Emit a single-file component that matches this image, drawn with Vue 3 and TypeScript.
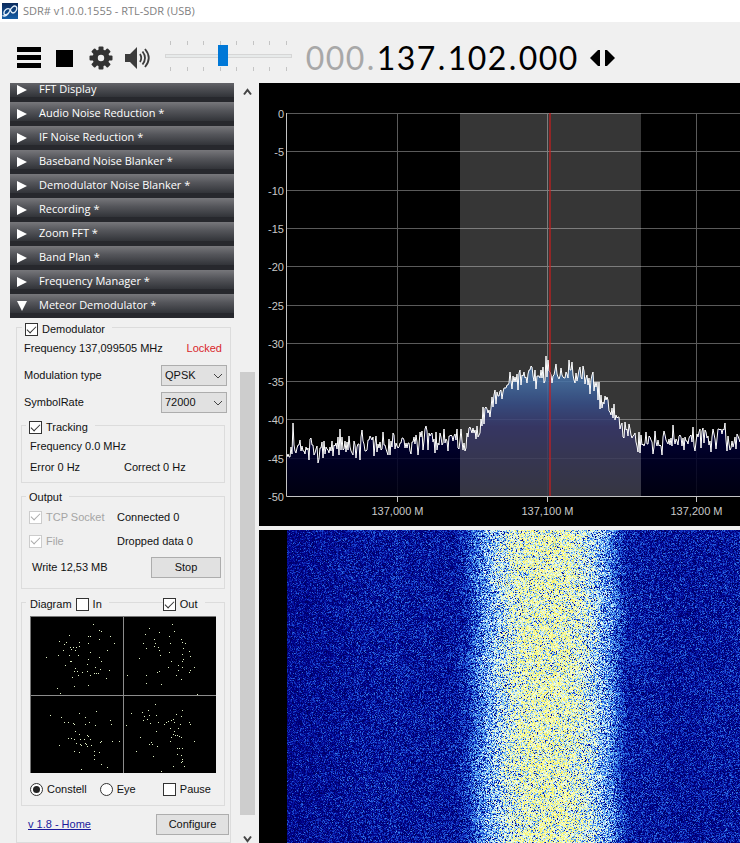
<script setup lang="ts">
import { onBeforeUnmount, onMounted, ref } from 'vue'

const plugins: string[] = [
  'FFT Display',
  'Audio Noise Reduction *',
  'IF Noise Reduction *',
  'Baseband Noise Blanker *',
  'Demodulator Noise Blanker *',
  'Recording *',
  'Zoom FFT *',
  'Band Plan *',
  'Frequency Manager *',
  'Meteor Demodulator *',
]
const openPlugin = ref('Meteor Demodulator *')

const digits = '000.137.102.000'.split('')
const volume = ref(45)
const demodulator = ref(true)
const tracking = ref(true)
const showIn = ref(false)
const showOut = ref(true)
const pause = ref(false)
const view = ref('constell')
const modulation = ref('QPSK')
const symbolRate = ref('72000')

// Small repeatable generator, so the noise looks the same on every load.
function makeRandom(seed: number): () => number {
  let s = seed
  return () => {
    s = (s + 0x6d2b79f5) | 0
    let t = Math.imul(s ^ (s >>> 15), 1 | s)
    t = (t + Math.imul(t ^ (t >>> 7), 61 | t)) ^ t
    return ((t ^ (t >>> 14)) >>> 0) / 4294967296
  }
}

type Point = [number, number]

function interpolate(points: Point[], x: number): number {
  for (let i = 1; i < points.length; i++) {
    const [x0, y0] = points[i - 1]
    const [x1, y1] = points[i]
    if (x <= x1) return y0 + ((y1 - y0) * (x - x0)) / (x1 - x0)
  }
  return points[points.length - 1][1]
}

// Spectrum, in the plot's own units.
const dbLines = Array.from({ length: 11 }, (_, i) => ({
  label: String(i === 0 ? 0 : -5 * i),
  y: Math.round(30 + i * 38.3) + 0.5,
}))
const freqLines = [
  { label: '137,000 M', x: 138.5 },
  { label: '137,100 M', x: 288.5 },
  { label: '137,200 M', x: 437.5 },
]
const envelope: Point[] = [
  [28, 368], [50, 368], [80, 364], [110, 362], [141, 361], [170, 357], [196, 357],
  [204, 359], [212, 350], [221, 341], [230, 325], [240, 307], [250, 299], [262, 295],
  [275, 292], [300, 291], [315, 292], [330, 294], [339, 310], [350, 322], [358, 335],
  [366, 348], [379, 356], [400, 359], [430, 356], [481, 355],
]
const spikes: Record<number, number> = {
  34: 340, 81: 346, 124: 349, 185: 346, 202: 346, 287: 273, 313: 279, 414: 342, 444: 345,
}
const rnd = makeRandom(41)
const samples: Point[] = []
for (let x = 28; x <= 482; x++) {
  const noise = (rnd() + rnd() - 1) * 16
  samples.push([x, spikes[x] ?? Math.round(interpolate(envelope, x) + noise)])
}
const trace = samples.map(([x, y]) => `${x},${y}`).join(' ')
const area = `28,413 ${trace} 482,413`

// Constellation points.
const stars: Point[] = [
  [280, 103], [296, 121], [304, 122], [206, 136], [263, 139], [271, 139], [331, 137], [176, 154],
  [199, 157], [191, 163], [237, 155], [298, 148], [343, 160], [265, 160], [209, 170], [219, 170],
  [212, 178], [226, 180], [190, 179], [238, 169], [271, 187], [322, 181], [175, 196], [206, 196],
  [233, 196], [263, 206], [298, 200], [139, 200], [209, 213], [214, 213], [262, 222], [303, 212],
  [196, 225], [224, 233], [286, 232], [301, 238], [328, 241], [221, 244], [232, 244], [247, 247],
  [262, 244], [289, 250], [293, 248], [235, 256], [271, 256], [319, 265], [223, 289], [263, 286],
  [172, 295], [179, 308], [217, 262], [283, 250], [227, 171], [448, 115], [517, 103], [436, 131],
  [478, 127], [523, 122], [463, 148], [508, 139], [428, 160], [466, 160], [511, 160], [544, 148],
  [545, 157], [556, 160], [439, 173], [463, 169], [475, 172], [476, 180], [548, 173], [568, 184],
  [481, 194], [508, 187], [418, 203], [545, 193], [548, 206], [569, 199], [514, 214], [547, 214],
  [535, 226], [547, 232], [581, 232], [505, 232], [472, 247], [478, 244], [533, 241], [568, 247],
  [439, 256], [529, 256], [544, 268], [484, 283], [439, 280], [592, 313], [382, 256], [569, 239],
  [149, 376], [184, 382], [238, 370], [289, 364], [331, 391], [332, 403], [191, 397], [205, 397],
  [220, 400], [221, 403], [254, 403], [268, 397], [286, 406], [256, 382], [226, 424], [238, 433],
  [205, 445], [223, 448], [212, 444], [241, 448], [253, 446], [262, 436], [265, 438], [271, 448],
  [241, 463], [244, 466], [256, 460], [260, 469], [274, 466], [301, 457], [304, 454], [335, 454],
  [358, 454], [176, 466], [221, 484], [236, 487], [259, 463], [283, 484], [298, 487], [283, 496],
  [283, 508], [304, 523], [322, 532], [242, 538], [229, 460], [466, 343], [427, 367], [445, 361],
  [394, 370], [433, 379], [448, 376], [469, 376], [442, 388], [428, 391], [379, 406], [451, 400],
  [473, 397], [493, 403], [499, 397], [505, 394], [514, 391], [523, 397], [520, 386], [529, 373],
  [545, 361], [544, 379], [568, 397], [569, 403], [541, 403], [469, 424], [511, 415], [535, 415],
  [523, 424], [520, 433], [526, 436], [530, 436], [544, 442], [514, 442], [421, 442], [511, 454],
  [583, 454], [457, 463], [448, 463], [454, 457], [470, 469], [532, 475], [538, 475], [547, 475],
  [409, 484], [460, 499], [532, 493], [544, 494], [547, 508], [544, 517], [520, 529], [553, 529],
  [484, 543], [547, 514], [538, 437],
]

// Waterfall.
const waterfall = ref<HTMLCanvasElement | null>(null)
const level: Point[] = [
  [28, 0.22], [110, 0.27], [195, 0.27], [207, 0.34], [216, 0.46], [226, 0.58], [238, 0.7],
  [250, 0.8], [264, 0.89], [285, 0.92], [308, 0.9], [322, 0.82], [336, 0.7], [348, 0.58],
  [358, 0.44], [368, 0.3], [420, 0.26], [481, 0.28],
]
const stops: [number, number, number, number][] = [
  [0, 0, 0, 100], [0.2, 0, 0, 134], [0.3, 8, 24, 165], [0.42, 28, 80, 215], [0.55, 70, 150, 235],
  [0.68, 160, 215, 248], [0.8, 236, 252, 246], [0.92, 250, 253, 175], [1.06, 246, 242, 110],
]

function colour(v: number): number[] {
  if (v <= 0) return stops[0].slice(1)
  for (let i = 1; i < stops.length; i++) {
    if (v <= stops[i][0]) {
      const a = stops[i - 1]
      const b = stops[i]
      const t = (v - a[0]) / (b[0] - a[0])
      return [1, 2, 3].map((k) => a[k] + (b[k] - a[k]) * t)
    }
  }
  return stops[stops.length - 1].slice(1)
}

function drawWaterfall(): void {
  const canvas = waterfall.value
  const ctx = canvas?.getContext('2d')
  if (!canvas || !ctx) return
  const w = Math.max(1, canvas.clientWidth)
  const h = Math.max(1, canvas.clientHeight)
  canvas.width = w
  canvas.height = h
  const image = ctx.createImageData(w, h)
  const random = makeRandom(7)
  const scale = 481 / w
  for (let y = 0; y < h; y++) {
    const drift = Math.sin(y / 17) * 2
    for (let x = 0; x < w; x++) {
      const px = x * scale
      let rgb = [0, 0, 0]
      if (px >= 28) {
        let base = interpolate(level, Math.max(28, px + drift))
        if (Math.abs(px - 137) < 1) base += 0.06
        const spread = 0.1 + base * 0.1
        const n = Math.log(0.02 - Math.log(1 - random() * 0.999)) * spread + 0.04
        rgb = colour(base + n)
      }
      const i = (y * w + x) * 4
      image.data[i] = rgb[0]
      image.data[i + 1] = rgb[1]
      image.data[i + 2] = rgb[2]
      image.data[i + 3] = 255
    }
  }
  ctx.putImageData(image, 0, 0)
}

onMounted(() => {
  drawWaterfall()
  window.addEventListener('resize', drawWaterfall)
})
onBeforeUnmount(() => window.removeEventListener('resize', drawWaterfall))
</script>

<template>
  <div class="app">
    <header class="titlebar">
      <svg class="logo" viewBox="0 0 16 16" aria-hidden="true">
        <defs>
          <linearGradient id="logo-bg" x1="0" y1="0" x2="0" y2="1">
            <stop offset="0" stop-color="#0a2a5c" />
            <stop offset="1" stop-color="#1760a8" />
          </linearGradient>
        </defs>
        <rect width="16" height="16" fill="url(#logo-bg)" />
        <path
          d="M0.500 12.500C3 14 6 12 7.500 8.500C9 4.500 12 2 14 3.500C16 5.500 13.500 10 11 10C8.500 10 9 7 7.500 6C5 4.500 1.500 8 2 10.500C2.500 13 6 11.500 7.500 8.500"
          fill="none" stroke="#e4f0fa" stroke-width="1.300" />
      </svg>
      <span>SDR# v1.0.0.1555 - RTL-SDR (USB)</span>
    </header>

    <div class="toolbar">
      <button class="tool" type="button" aria-label="Menu">
        <svg width="24" height="22" viewBox="0 0 24 22"><path d="M0 0h24v5H0zM0 8h24v5H0zM0 16h24v5H0z" /></svg>
      </button>
      <button class="tool stop" type="button" aria-label="Stop radio">
        <svg width="18" height="18" viewBox="0 0 18 18"><rect width="17" height="17" y="1" /></svg>
      </button>
      <button class="tool gear" type="button" aria-label="Settings">
        <svg width="24" height="24" viewBox="-12 -12 24 24" fill="#333">
          <g>
            <rect v-for="a in 8" :key="a" x="-2.500" y="-11.500" width="5" height="6" rx="1" :transform="`rotate(${a * 45})`" />
          </g>
          <path fill-rule="evenodd" d="M0-8.500a8.500 8.500 0 1 0 0 17a8.500 8.500 0 1 0 0-17zM0-3.200a3.200 3.200 0 1 1 0 6.400a3.200 3.200 0 1 1 0-6.400z" />
        </svg>
      </button>
      <button class="tool speaker" type="button" aria-label="Mute">
        <svg width="25" height="22" viewBox="0 0 25 22">
          <path d="M0 7h5L12 0v22L5 15H0z" fill="#3c3c3c" />
          <path d="M15 7q2.500 4 0 8M17.500 4.500q5 6.500 0 13M20 2q7.500 9 0 18" fill="none" stroke="#3c3c3c" stroke-width="1.800" />
        </svg>
      </button>
      <div class="volume">
        <span class="ticks"><i v-for="n in 8" :key="n"></i></span>
        <input v-model.number="volume" type="range" min="0" max="100" aria-label="Volume" />
        <span class="ticks"><i v-for="n in 8" :key="n"></i></span>
      </div>
      <div class="frequency">
        <span v-for="(d, i) in digits" :key="i" :class="{ dot: d === '.', idle: i < 4 }">{{ d }}</span>
      </div>
      <button class="tool step" type="button" aria-label="Change tuning style">
        <svg width="26" height="18" viewBox="0 0 26 18"><path d="M0 9L8 1h2v16H8zM25 9L17 1h-2v16h2z" /></svg>
      </button>
    </div>

    <div class="main">
      <aside class="side">
        <div class="panel">
          <div class="plugins">
            <button v-for="p in plugins" :key="p" type="button" class="plugin" @click="openPlugin = p">
              <svg width="12" height="12" viewBox="0 0 12 12" aria-hidden="true">
                <path :d="p === openPlugin ? 'M1 1h10L6 11z' : 'M1 1l10 5L1 11z'" fill="#fff" />
              </svg>
              <span>{{ p }}</span>
            </button>
          </div>

          <fieldset class="group outer">
            <legend>
              <label class="check"><input v-model="demodulator" type="checkbox" />Demodulator</label>
            </legend>
            <div class="row freq"><span>Frequency 137,099505 MHz</span><span class="locked">Locked</span></div>
            <div class="row pick">
              <label for="modulation">Modulation type</label>
              <span class="select">
                <select id="modulation" v-model="modulation"><option>QPSK</option><option>OQPSK</option></select>
                <svg width="10" height="6" viewBox="0 0 10 6"><path d="M1 1l4 4l4-4" /></svg>
              </span>
            </div>
            <div class="row pick">
              <label for="rate">SymbolRate</label>
              <span class="select">
                <select id="rate" v-model="symbolRate"><option>72000</option><option>80000</option></select>
                <svg width="10" height="6" viewBox="0 0 10 6"><path d="M1 1l4 4l4-4" /></svg>
              </span>
            </div>

            <fieldset class="group">
              <legend>
                <label class="check"><input v-model="tracking" type="checkbox" />Tracking</label>
              </legend>
              <div class="row tracking">Frequency 0.0 MHz</div>
              <div class="row error"><span>Error 0 Hz</span><span>Correct 0 Hz</span></div>
            </fieldset>

            <fieldset class="group inner">
              <legend class="plain">Output</legend>
              <div class="row output">
                <label class="check"><input type="checkbox" checked disabled />TCP Socket</label>
                <span>Connected 0</span>
              </div>
              <div class="row output">
                <label class="check"><input type="checkbox" checked disabled />File</label>
                <span>Dropped data 0</span>
              </div>
              <div class="row write">
                <span>Write 12,53 MB</span>
                <button class="push" type="button">Stop</button>
              </div>
            </fieldset>

            <fieldset class="group inner">
              <legend class="diagram-legend">
                <span>Diagram</span>
                <label class="check"><input v-model="showIn" type="checkbox" />In</label>
                <i></i>
                <label class="check"><input v-model="showOut" type="checkbox" />Out</label>
              </legend>
              <svg class="constellation" viewBox="90 78 558 471" shape-rendering="crispEdges">
                <rect x="90" y="78" width="558" height="471" />
                <path d="M370.500 78V549M90 316.500H648" stroke="#8c8c8c" stroke-width="3" />
                <path d="M91.500 549V79.500H648" fill="none" stroke="#777" stroke-width="3" />
                <rect v-for="(s, i) in stars" :key="i" :x="s[0]" :y="s[1]" width="3" height="3" class="star" />
              </svg>
              <div class="row views">
                <label class="check"><input v-model="view" type="radio" name="view" value="constell" />Constell</label>
                <label class="check"><input v-model="view" type="radio" name="view" value="eye" />Eye</label>
                <label class="check"><input v-model="pause" type="checkbox" />Pause</label>
              </div>
            </fieldset>

            <div class="row foot">
              <a href="#home">v 1.8 - Home</a>
              <button class="push" type="button">Configure</button>
            </div>
          </fieldset>
        </div>

        <div class="scrollbar" aria-hidden="true">
          <svg width="9" height="8" viewBox="0 0 9 8"><path d="M1 6.500L4.500 2L8 6.500" /></svg>
          <div class="thumb"></div>
          <svg width="9" height="8" viewBox="0 0 9 8"><path d="M1 1.500L4.500 6L8 1.500" /></svg>
        </div>
      </aside>

      <main class="displays">
        <svg class="spectrum" viewBox="0 0 481 443" role="img" aria-label="Spectrum">
          <defs>
            <linearGradient id="fill" gradientUnits="userSpaceOnUse" x1="0" y1="270" x2="0" y2="413">
              <stop offset="0" stop-color="#1e5a9c" />
              <stop offset="0.200" stop-color="#12488c" />
              <stop offset="0.360" stop-color="#001e68" />
              <stop offset="0.520" stop-color="#000042" />
              <stop offset="0.750" stop-color="#000028" />
              <stop offset="1" stop-color="#000012" />
            </linearGradient>
          </defs>
          <rect width="481" height="443" fill="#000" />
          <g stroke="#5a5a5a">
            <line v-for="l in dbLines" :key="l.label" x1="28" x2="481" :y1="l.y" :y2="l.y" />
            <line v-for="f in freqLines" :key="f.label" :x1="f.x" :x2="f.x" y1="30" y2="413" />
          </g>
          <polygon :points="area" fill="url(#fill)" fill-opacity="0.850" />
          <rect x="201" y="30" width="181" height="383" fill="#fff" fill-opacity="0.210" />
          <polyline :points="trace" fill="none" stroke="#fff" />
          <path d="M291 30V413" stroke="#c81e1e" stroke-opacity="0.850" stroke-width="1.500" />
          <path d="M27.500 30V413.500H481M138.500 413v6M288.500 413v6M437.500 413v6" fill="none" stroke="#c4c4c4" />
          <g class="axis">
            <text v-for="l in dbLines" :key="l.label" x="25" :y="l.y + 4" text-anchor="end">{{ l.label }}</text>
            <text v-for="f in freqLines" :key="f.label" :x="f.x" y="432" text-anchor="middle">{{ f.label }}</text>
          </g>
        </svg>
        <div class="fall">
          <canvas ref="waterfall"></canvas>
        </div>
      </main>
    </div>
  </div>
</template>

<style>
body {
  background: #f0f0f0;
}
</style>

<style scoped>
.app {
  display: flex;
  flex-direction: column;
  height: 100vh;
  overflow: hidden;
  background: #f0f0f0;
  color: #111;
  font: 11px/13px "Liberation Sans", sans-serif;
}
.app *,
.app *::before {
  box-sizing: border-box;
}
button,
input,
select {
  margin: 0;
  font: inherit;
  color: inherit;
}
.titlebar {
  display: flex;
  align-items: center;
  gap: 5px;
  flex: none;
  height: 22px;
  padding-left: 2px;
  background: #fff;
  color: #808080;
  font: 11px/20px "Open Sans", sans-serif;
}
.logo {
  width: 16px;
  height: 16px;
}
.toolbar {
  display: flex;
  align-items: center;
  flex: none;
  height: 61px;
  padding: 10px 0 0 17px;
}
.tool {
  display: flex;
  padding: 0;
  border: 0;
  background: none;
}
.stop {
  margin-left: 15px;
}
.gear {
  margin-left: 15px;
}
.speaker {
  margin-left: 12px;
}
.volume {
  display: flex;
  flex-direction: column;
  width: 127px;
  margin: 0 13px 0 15px;
  padding-bottom: 4px;
}
.ticks {
  display: flex;
  justify-content: space-between;
  padding: 0 5px;
}
.ticks i {
  width: 1px;
  height: 4px;
  background: #c4c4c4;
}
.volume input {
  appearance: none;
  width: 100%;
  height: 22px;
  background: none;
}
.volume input::-webkit-slider-runnable-track {
  height: 4px;
  border: 1px solid #d6d6d6;
  background: #e7eaea;
}
.volume input::-webkit-slider-thumb {
  appearance: none;
  width: 10px;
  height: 21px;
  margin-top: -10px;
  border-radius: 0;
  background: #0078d7;
}
.frequency {
  display: flex;
  font: 400 32px/36px Lato, "Open Sans", sans-serif;
  color: #000;
}
.frequency span {
  width: 20px;
  text-align: center;
}
.frequency .dot {
  width: 11px;
}
.frequency .idle {
  color: #a8a8a8;
}
.step {
  margin-left: 12px;
}
.main {
  display: flex;
  flex: 1;
  min-height: 0;
}
.side {
  display: flex;
  gap: 6px;
  width: 259px;
  flex: none;
  padding: 0 4px 0 10px;
}
.panel {
  flex: 1;
  min-width: 0;
  overflow: hidden;
}
.plugins {
  margin-top: -5px;
}
.plugin {
  display: flex;
  align-items: center;
  gap: 11px;
  width: 100%;
  height: 24px;
  padding: 0 0 0 6px;
  border: 0;
  background: linear-gradient(#77777b, #55565b 35%, #313338 80%, #27282d 81%);
  color: #fff;
  font: 11px/16px "Open Sans", sans-serif;
}
.plugin span {
  padding-bottom: 3px;
}
.group {
  min-width: 0;
  margin: 0;
  padding: 0;
  border: 1px solid #dcdcdc;
}
.outer {
  width: 215px;
  margin-left: 6px;
}
.outer .group {
  margin: 0 5px 0 4px;
}
.outer .inner {
  margin-top: 4px;
}
legend {
  height: 18px;
  margin-left: 5px;
  padding: 5px 7px 0 3px;
}
.group .group legend {
  margin-left: 4px;
}
legend.plain {
  padding-top: 4px;
}
.check {
  display: flex;
  align-items: center;
  gap: 4px;
}
.check input {
  display: grid;
  place-content: center;
  appearance: none;
  width: 13px;
  height: 13px;
  border: 1px solid #333;
  background: #fff;
}
.check input[type="checkbox"]:checked::before {
  content: "";
  width: 9px;
  height: 5px;
  margin-top: -3px;
  border: solid #333;
  border-width: 0 0 1px 1px;
  transform: rotate(-45deg);
}
.check input:disabled {
  border-color: #ccc;
}
.check input[type="checkbox"]:disabled::before {
  border-color: #aaa;
}
.check:has(input:disabled) {
  color: #a5a5a5;
}
.check input[type="radio"] {
  border-radius: 50%;
}
.check input[type="radio"]:checked::before {
  content: "";
  width: 7px;
  height: 7px;
  border-radius: 50%;
  background: #222;
}
.row {
  display: flex;
  align-items: center;
  padding-left: 7px;
}
.freq {
  height: 26px;
  padding-bottom: 2px;
}
.locked {
  margin-left: auto;
  padding-right: 8px;
  color: #d9262b;
}
.pick {
  justify-content: space-between;
  height: 27px;
  padding-right: 3px;
}
.select {
  display: grid;
  align-items: center;
  width: 66px;
}
.select select,
.select svg {
  grid-area: 1 / 1;
}
.select select {
  appearance: none;
  width: 100%;
  height: 21px;
  padding: 0 3px;
  border: 1px solid #adadad;
  border-radius: 0;
  background: #e1e1e1;
}
.select svg {
  justify-self: end;
  margin-right: 4px;
  fill: none;
  stroke: #444;
  pointer-events: none;
}
.tracking {
  height: 24px;
  padding-left: 8px;
}
.error {
  height: 24px;
  padding: 0 0 6px 8px;
}
.error span:first-child {
  width: 94px;
}
.output {
  height: 24px;
}
.output .check {
  width: 88px;
}
.write {
  justify-content: space-between;
  height: 35px;
  padding: 0 3px 6px 10px;
}
.push {
  height: 21px;
  width: 70px;
  padding: 0;
  border: 1px solid #adadad;
  background: #e1e1e1;
}
.diagram-legend {
  display: flex;
  align-items: center;
  padding-left: 4px;
}
.diagram-legend .check:nth-child(2) {
  margin-left: 4px;
}
.diagram-legend i {
  width: 54px;
  height: 1px;
  margin: 0 0 4px 7px;
  background: #dcdcdc;
}
.constellation {
  display: block;
  width: 186px;
  height: 157px;
  margin: 5px 0 0 8px;
}
.star {
  fill: #dff0c4;
}
.views {
  height: 32px;
  padding-left: 8px;
}
.views .check:nth-child(2) {
  margin-left: 13px;
}
.views .check:nth-child(3) {
  margin-left: auto;
  padding-right: 13px;
}
.foot {
  justify-content: space-between;
  height: 36px;
  padding: 0 1px 0 11px;
}
.foot .push {
  width: 73px;
}
.foot a {
  color: #1a1a9c;
}
.scrollbar {
  display: flex;
  flex-direction: column;
  align-items: center;
  width: 15px;
  padding-top: 5px;
}
.scrollbar svg {
  flex: none;
  fill: none;
  stroke: #444;
  stroke-width: 2;
}
.thumb {
  flex: 1;
  width: 15px;
  margin: 276px 0 20px;
  background: #cdcdcd;
}
.displays {
  display: flex;
  flex-direction: column;
  flex: 1;
  gap: 4px;
  min-width: 0;
}
.spectrum {
  display: block;
  flex: none;
  width: 100%;
}
.axis {
  fill: #c8c8c8;
  font: 11px "Liberation Sans", sans-serif;
}
.fall {
  flex: 1;
  min-height: 0;
  background: #000;
}
.fall canvas {
  display: block;
  width: 100%;
  height: 100%;
}
</style>
